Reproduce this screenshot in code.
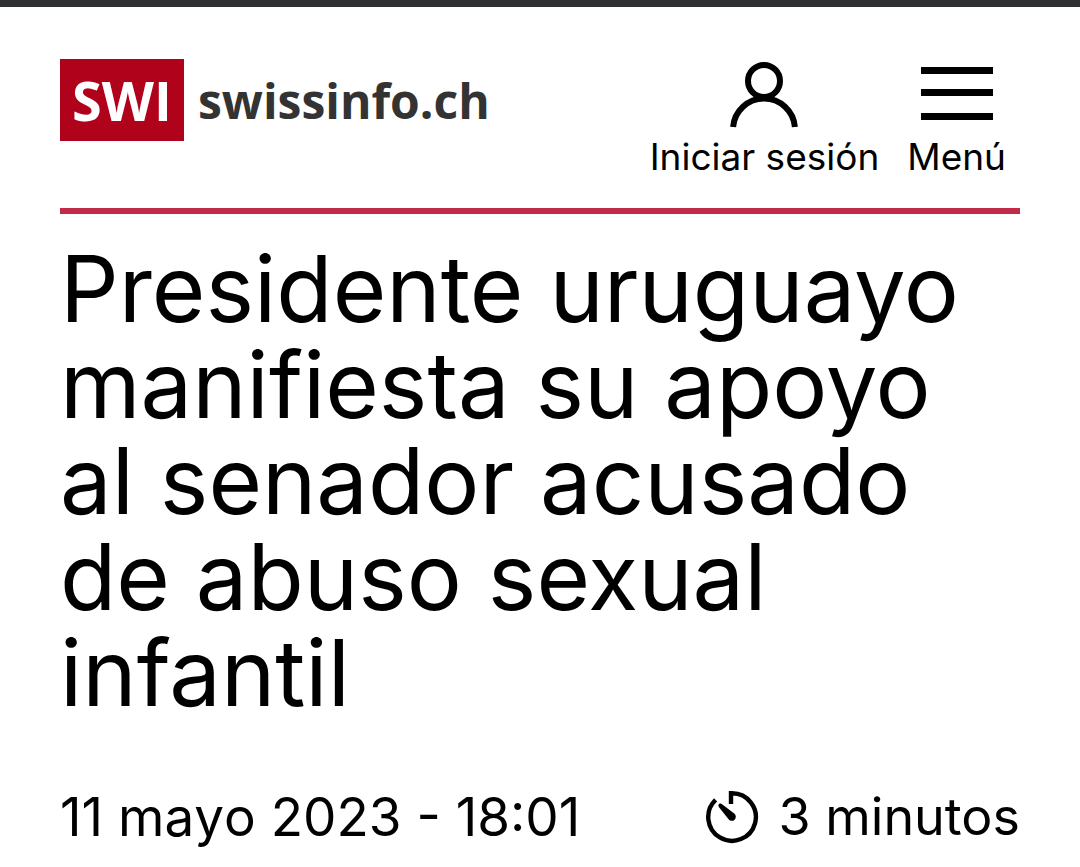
<div class="page">
  <header>
    <a class="logo" href="/" aria-label="SWI swissinfo.ch">
      <span class="badge">SWI</span><span class="name">swissinfo.ch</span>
    </a>
    <nav>
      <button type="button">
        <svg width="72" height="72" viewBox="0 0 72 72" fill="none" stroke="#000" stroke-width="6">
          <circle cx="36" cy="22" r="16" />
          <path d="M5.1 68A31 31 0 0 1 66.9 68" />
        </svg>
        <span>Iniciar sesión</span>
      </button>
      <button type="button">
        <svg width="72" height="72" viewBox="0 0 72 72" fill="none" stroke="#000" stroke-width="7">
          <path d="M0 11.5H72M0 33.5H72M0 57.5H72" />
        </svg>
        <span>Menú</span>
      </button>
    </nav>
  </header>
  <main>
    <h1>Presidente uruguayo manifiesta su apoyo al senador acusado de abuso sexual infantil</h1>
    <div class="meta">
      <time datetime="2023-05-11T18:01">11 mayo 2023 - 18:01</time>
      <span class="reading">
        <svg width="54" height="54" viewBox="0 0 54 54" fill="none" stroke="#000" stroke-width="4.4">
          <path d="M26 14V3.2H27A23.8 23.8 0 1 1 10.6 9.8" />
          <path d="M13.6 14.4Q14.6 12.8 16.4 13.8L29.2 23.6A4 4 0 1 1 23.6 29.2L14 17.2Q13 15.8 13.6 14.4Z" fill="#000" stroke="none" />
        </svg>
        3 minutos
      </span>
    </div>
  </main>
</div>

<style>
  :global(body) { margin: 0; background: #fff; }
  .page { border-top: 7px solid #2f3032; padding: 0 60px; color: #000; font-family: Inter, "Liberation Sans", sans-serif; }
  header { display: flex; justify-content: space-between; align-items: flex-start; padding: 52px 14px 27px 0; border-bottom: 6px solid #c12b48; }
  .logo { display: flex; align-items: center; gap: 14px; text-decoration: none; font-family: "Open Sans", sans-serif; font-weight: 700; color: #333; }
  .badge { background: #b0021b; color: #fff; width: 124px; height: 82px; line-height: 82px; text-align: center; font-size: 54px; }
  .name { font-size: 48px; }
  nav { display: flex; gap: 28px; }
  button { display: flex; flex-direction: column; align-items: center; gap: 2px; border: 0; padding: 0; background: none; color: inherit; font: 37px/48px Inter, sans-serif; cursor: pointer; }
  h1 { margin: 27px 0 0; font-size: 92px; line-height: 96px; font-weight: 400; }
  .meta { display: flex; justify-content: space-between; align-items: center; margin-top: 64px; font-size: 52px; line-height: 64px; }
  time { font-size: 53px; font-kerning: none; }
  .reading { display: flex; align-items: center; gap: 20px; }
</style>
